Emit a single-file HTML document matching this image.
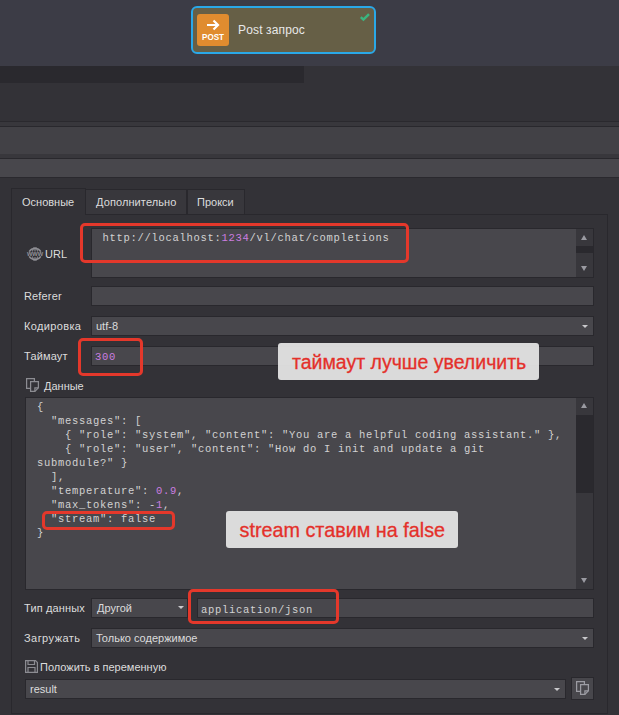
<!DOCTYPE html>
<html><head><meta charset="utf-8">
<style>
*{margin:0;padding:0;box-sizing:border-box}
html,body{width:619px;height:715px;overflow:hidden;background:#333237;font-family:"Liberation Sans",sans-serif;}
.a{position:absolute}
.lbl{position:absolute;font-size:11px;color:#dcdcdc;line-height:14px;white-space:nowrap}
.inp{position:absolute;background:#48474c;border:1px solid #29282d}
.mono{font-family:"Liberation Mono",monospace;font-size:10.5px;letter-spacing:0.7px;color:#d2d2d2;white-space:pre;line-height:14px}
.num{color:#cc7ee0}
.red{position:absolute;border:3px solid #e4382b;border-radius:5px}
.note{position:absolute;background:rgba(228,228,228,0.94);border-radius:3px;color:#e4302a;white-space:nowrap;-webkit-text-stroke:0.3px #e4302a}
.arr{position:absolute;width:0;height:0;border-left:3.5px solid transparent;border-right:3.5px solid transparent;border-top:3.3px solid #c9c9cc}
</style></head><body>
<!-- top canvas -->
<div class="a" style="left:0;top:0;width:619px;height:66px;background:#3c3c46"></div>
<!-- node -->
<div class="a" style="left:191px;top:6px;width:185px;height:48px;border:2px solid #2aa8e8;border-radius:6px;background:#665f46"></div>
<div class="a" style="left:197px;top:14px;width:32px;height:32px;border-radius:3px;background:#e08c2f"></div>
<svg class="a" style="left:197px;top:14px" width="32" height="32" viewBox="0 0 32 32">
<path d="M10 11 H21 M16.5 6.5 L21 11 L16.5 15.5" stroke="#fff" stroke-width="2.2" fill="none" stroke-linecap="butt"/>
<text x="5" y="25.8" font-family="Liberation Sans" font-weight="bold" font-size="9" fill="#fff" textLength="22" lengthAdjust="spacingAndGlyphs">POST</text>
</svg>
<div class="lbl" style="left:238px;top:23px;font-size:12px;color:#e8e8e8;letter-spacing:0.15px">Post запрос</div>
<svg class="a" style="left:359px;top:12px" width="12" height="10" viewBox="0 0 12 10">
<path d="M1.8 5.2 L4.4 7.6 L10 2.2" stroke="#3bb57f" stroke-width="2.5" fill="none"/>
</svg>
<!-- dark strip -->
<div class="a" style="left:0;top:66px;width:304px;height:17px;background:#2a292e"></div>
<!-- bands -->
<div class="a" style="left:0;top:121px;width:619px;height:1px;background:#2a292e"></div>
<div class="a" style="left:0;top:122px;width:619px;height:4px;background:#38373c"></div>
<div class="a" style="left:0;top:126px;width:619px;height:1px;background:#29282d"></div>
<div class="a" style="left:0;top:127px;width:619px;height:27px;background:#424146"></div>
<div class="a" style="left:0;top:154px;width:619px;height:4px;background:#38373c"></div>
<div class="a" style="left:0;top:158px;width:619px;height:1px;background:#29282d"></div>
<div class="a" style="left:0;top:159px;width:619px;height:18px;background:#48474c"></div>
<div class="a" style="left:0;top:177px;width:619px;height:1px;background:#2a292e"></div>

<!-- panel -->
<div class="a" style="left:11px;top:214px;width:597px;height:500px;border:1px solid #29282d;background:#333237"></div>
<!-- tabs -->
<div class="a" style="left:85px;top:189px;width:102px;height:26px;border:1px solid #29282d;background:#38373c"></div>
<div class="a" style="left:187px;top:189px;width:58px;height:26px;border:1px solid #29282d;background:#38373c"></div>
<div class="a" style="left:11px;top:188px;width:75px;height:27px;border:1px solid #29282d;border-bottom:none;background:#333237"></div>
<div class="lbl" style="left:22px;top:195px">Основные</div>
<div class="lbl" style="left:96px;top:195px;letter-spacing:0.1px">Дополнительно</div>
<div class="lbl" style="left:197px;top:195px">Прокси</div>

<!-- URL -->
<svg class="a" style="left:26px;top:246px" width="18" height="16" viewBox="0 0 18 16">
<g fill="none" stroke="#8e8e94" stroke-width="1.5">
<path d="M3.2 5.6 A6.5 5.5 0 0 1 14.8 5.6"/><path d="M3.2 10.4 A6.5 5.5 0 0 0 14.8 10.4"/>
</g>
<g fill="none" stroke="#8e8e94" stroke-width="1">
<path d="M6.5 5.5 Q6.8 3 8 1.2"/><path d="M9 1 V5.5"/><path d="M11.5 5.5 Q11.2 3 10 1.2"/>
<path d="M6.5 10.5 Q6.8 13 8 14.8"/><path d="M9 11 V15"/><path d="M11.5 10.5 Q11.2 13 10 14.8"/>
</g>
<text x="1" y="10.3" font-family="Liberation Sans" font-weight="bold" font-size="6.5" fill="#8e8e94" textLength="16" lengthAdjust="spacingAndGlyphs">www</text>
</svg>
<div class="lbl" style="left:45px;top:247px">URL</div>
<div class="inp" style="left:91px;top:228px;width:503px;height:50px"></div>
<div class="a" style="left:576px;top:229px;width:17px;height:48px;background:#38373c"></div>
<div class="a" style="left:576px;top:246px;width:17px;height:7px;background:#2a292e"></div>
<div class="a" style="left:581px;top:235px;width:0;height:0;border-left:3.5px solid transparent;border-right:3.5px solid transparent;border-bottom:5px solid #9a9aa1"></div>
<div class="a" style="left:581px;top:266px;width:0;height:0;border-left:3.5px solid transparent;border-right:3.5px solid transparent;border-top:5px solid #9a9aa1"></div>
<div class="a mono" style="left:102.5px;top:231px">http://localhost:<span class="num">1234</span>/vl/chat/completions</div>
<div class="red" style="left:80px;top:223px;width:329px;height:40px"></div>

<!-- Referer etc -->
<div class="lbl" style="left:24px;top:289px;letter-spacing:0.15px">Referer</div>
<div class="inp" style="left:91px;top:286px;width:503px;height:20px"></div>
<div class="lbl" style="left:24px;top:319px;letter-spacing:0.35px">Кодировка</div>
<div class="inp" style="left:91px;top:316px;width:503px;height:20px"></div>
<div class="lbl" style="left:96px;top:319px">utf-8</div>
<div class="arr" style="left:582px;top:325px"></div>
<div class="lbl" style="left:24px;top:349px;letter-spacing:0.15px">Таймаут</div>
<div class="inp" style="left:91px;top:346px;width:503px;height:20px"></div>
<div class="a mono num" style="left:95px;top:350px">300</div>
<div class="red" style="left:78px;top:338px;width:65px;height:38px"></div>
<div class="note" style="left:278px;top:343px;width:261px;height:37px;font-size:19.5px;line-height:39px;padding-left:14px">таймаут лучше увеличить</div>

<!-- Данные -->
<svg class="a" style="left:26px;top:378px" width="14" height="15" viewBox="0 0 14 15">
<g fill="none" stroke="#8c8c92" stroke-width="1.25">
<path d="M4 10.4 H0.6 V0.6 H8.4 V3"/>
<path d="M4.6 3.6 H12.4 V9.8 L8.9 13.4 H4.6 Z"/><path d="M8.9 13.4 V9.8 H12.4"/>
</g></svg>
<div class="lbl" style="left:44px;top:379px">Данные</div>
<div class="inp" style="left:25px;top:397px;width:569px;height:193px"></div>
<div class="a" style="left:576px;top:398px;width:17px;height:191px;background:#38373c"></div>
<div class="a" style="left:576px;top:415px;width:17px;height:78px;background:#2a292e"></div>
<div class="a" style="left:581px;top:403px;width:0;height:0;border-left:3.5px solid transparent;border-right:3.5px solid transparent;border-bottom:5px solid #9a9aa1"></div>
<div class="a" style="left:581px;top:578px;width:0;height:0;border-left:3.5px solid transparent;border-right:3.5px solid transparent;border-top:5px solid #9a9aa1"></div>
<div class="a mono" style="left:37px;top:400px">{
  "messages": [
    { "role": "system", "content": "You are a helpful coding assistant." },
    { "role": "user", "content": "How do I init and update a git
submodule?" }
  ],
  "temperature": <span class="num">0.9</span>,
  "max_tokens": -<span class="num">1</span>,
  "stream": false
}</div>
<div class="red" style="left:42px;top:511px;width:133px;height:19px"></div>
<div class="note" style="left:226px;top:511px;width:232px;height:37px;font-size:19.8px;line-height:39px;padding-left:13.5px">stream ставим на false</div>

<!-- Тип данных -->
<div class="lbl" style="left:24px;top:601px;letter-spacing:0.15px">Тип данных</div>
<div class="inp" style="left:91px;top:598px;width:97px;height:20px"></div>
<div class="lbl" style="left:97px;top:601px">Другой</div>
<div class="arr" style="left:178px;top:606px"></div>
<div class="inp" style="left:197px;top:598px;width:397px;height:20px"></div>
<div class="a mono" style="left:201px;top:603px">application/json</div>
<div class="red" style="left:188px;top:589px;width:151px;height:35px"></div>

<div class="lbl" style="left:24px;top:631px;letter-spacing:0.45px">Загружать</div>
<div class="inp" style="left:91px;top:628px;width:503px;height:20px"></div>
<div class="lbl" style="left:96px;top:631px">Только содержимое</div>
<div class="arr" style="left:582px;top:637px"></div>

<svg class="a" style="left:25px;top:660px" width="13" height="13" viewBox="0 0 13 13">
<g fill="none" stroke="#8c8c92" stroke-width="1.2">
<path d="M0.6 0.6 H10.5 L12.4 2.5 V12.4 H0.6 Z"/>
<path d="M3 0.6 V4.5 H9.5 V0.6"/>
<path d="M3 12.4 V7.5 H10 V12.4"/>
</g></svg>
<div class="lbl" style="left:40px;top:660px">Положить в переменную</div>
<div class="inp" style="left:25px;top:679px;width:541px;height:20px"></div>
<div class="lbl" style="left:30px;top:682px">result</div>
<div class="arr" style="left:554px;top:688px"></div>
<div class="a" style="left:571px;top:677px;width:23px;height:23px;background:#48474c;border:1px solid #29282d"></div>
<svg class="a" style="left:576px;top:681px" width="14" height="15" viewBox="0 0 14 15">
<g fill="none" stroke="#9c9ca3" stroke-width="1.25">
<path d="M4 10.4 H0.6 V0.6 H8.4 V3"/>
<path d="M4.6 3.6 H12.4 V9.8 L8.9 13.4 H4.6 Z"/><path d="M8.9 13.4 V9.8 H12.4"/>
</g></svg>
</body></html>
